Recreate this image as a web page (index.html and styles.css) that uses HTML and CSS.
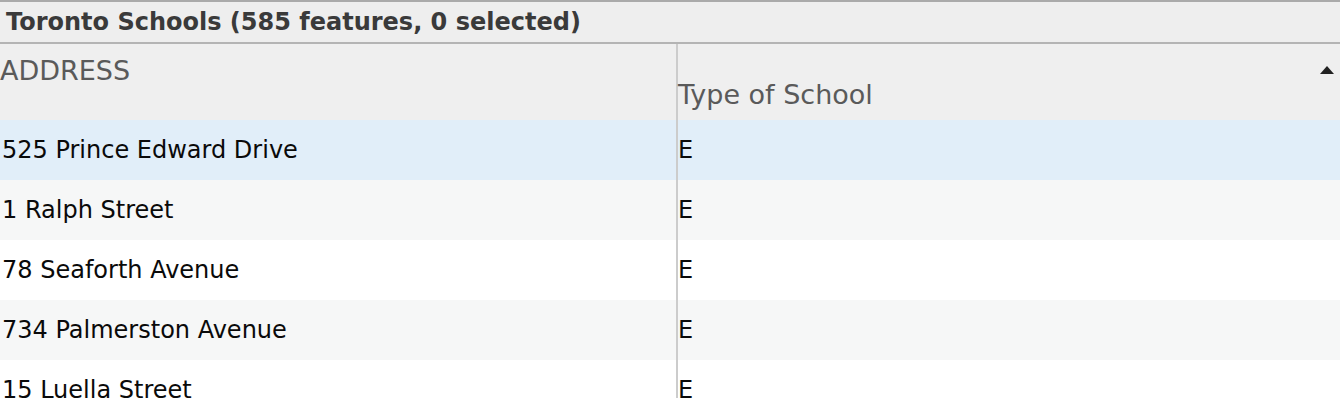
FILE: index.html
```html
<!DOCTYPE html>
<html lang="en">
<head>
  <meta charset="UTF-8">
  <meta name="viewport" content="width=device-width, initial-scale=1.0">
  <title>Toronto Schools</title>
  <link rel="stylesheet" href="styles.css">
</head>
<body>
  <div class="panel">
    <div class="panel-title">Toronto Schools (585 features, 0 selected)</div>

    <div class="grid">
      <div class="grid-head">
        <div class="col col-address head-cell">ADDRESS</div>
        <div class="col col-type head-cell head-type">
          <span>Type of School</span>
          <span class="sort-arrow"></span>
        </div>
      </div>

      <div class="grid-row is-active">
        <div class="col col-address">525 Prince Edward Drive</div>
        <div class="col col-type">E</div>
      </div>
      <div class="grid-row is-alt">
        <div class="col col-address">1 Ralph Street</div>
        <div class="col col-type">E</div>
      </div>
      <div class="grid-row">
        <div class="col col-address">78 Seaforth Avenue</div>
        <div class="col col-type">E</div>
      </div>
      <div class="grid-row is-alt">
        <div class="col col-address">734 Palmerston Avenue</div>
        <div class="col col-type">E</div>
      </div>
      <div class="grid-row">
        <div class="col col-address">15 Luella Street</div>
        <div class="col col-type">E</div>
      </div>
    </div>
  </div>
</body>
</html>
```

FILE: styles.css
```css
body {
  margin: 0;
  padding: 0;
  background-color: #ffffff;
  font-family: "DejaVu Sans", Verdana, sans-serif;
  overflow: hidden;
}
.panel {
  border-top: 2px solid #aaaaaa;
}
.panel-title {
  height: 40px;
  line-height: 40px;
  padding-left: 6px;
  background-color: #eeeeee;
  border-bottom: 2px solid #b4b4b4;
  color: #3a3a3a;
  font-size: 24px;
  font-weight: bold;
  white-space: nowrap;
}
.grid-head,
.grid-row {
  display: flex;
}
.col-address {
  width: 676px;
  flex-shrink: 0;
}
.col-type {
  flex: 1;
  border-left: 2px solid #cccccc;
}
.grid-head {
  height: 76px;
  background-color: #efefef;
  color: #5a5a5a;
}
.head-cell {
  font-size: 27px;
  line-height: 30px;
  padding-top: 12px;
}
.head-type {
  display: flex;
  justify-content: space-between;
  padding-top: 36px;
}
.sort-arrow {
  width: 0;
  height: 0;
  margin: -14px 6px 0 0;
  border-left: 7px solid transparent;
  border-right: 7px solid transparent;
  border-bottom: 8px solid #222222;
}
.grid-row {
  height: 60px;
  line-height: 60px;
  font-size: 24px;
  color: #0a0a0a;
  white-space: nowrap;
}
.grid-row .col-address {
  padding-left: 2px;
  width: 674px;
}
.grid-row.is-alt {
  background-color: #f6f7f7;
}
.grid-row.is-active {
  background-color: #e1eef9;
}
```
